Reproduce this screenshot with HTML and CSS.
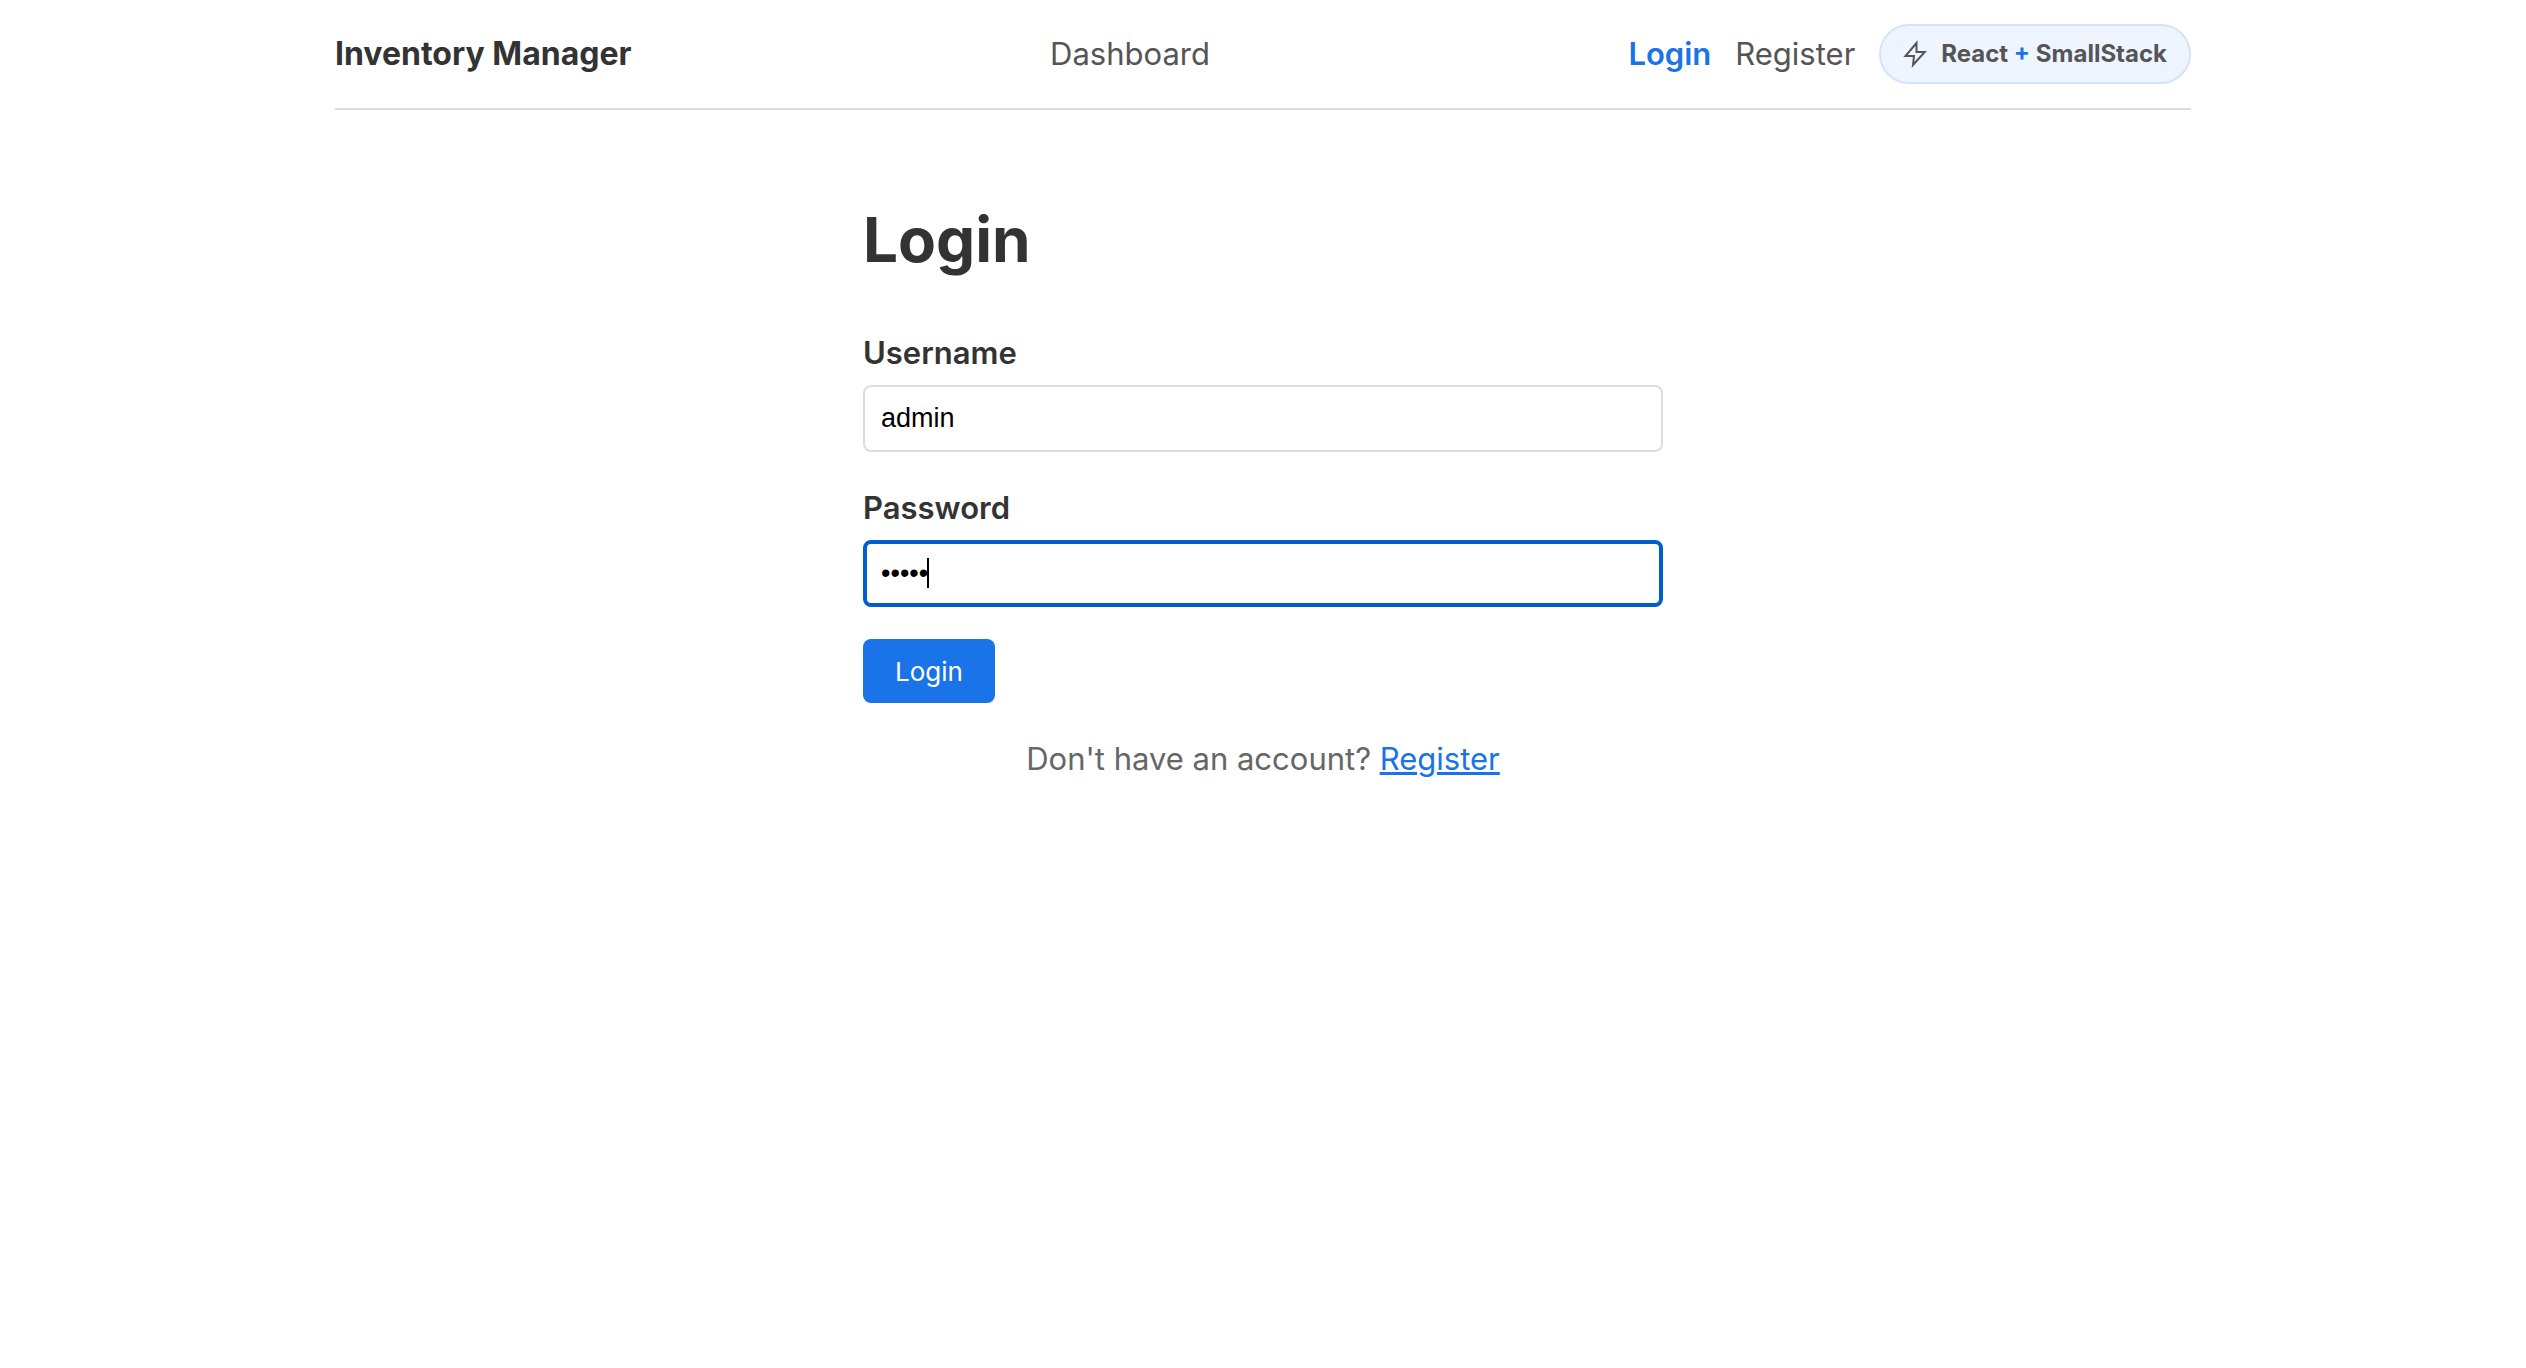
FILE: index.html
```html
<!DOCTYPE html>
<html lang="en">
<head>
<meta charset="utf-8">
<meta name="viewport" content="width=device-width, initial-scale=1">
<title>Login - Inventory Manager</title>
<link rel="stylesheet" href="styles.css">
</head>
<body>
<div class="container">
  <header class="navbar">
    <span class="brand">Inventory Manager</span>
    <nav class="nav-main"><a class="nav-link" href="#dashboard">Dashboard</a></nav>
    <nav class="nav-user">
      <a class="nav-link active" href="#login">Login</a>
      <a class="nav-link" href="#register">Register</a>
      <a class="stack-badge" href="#stack">
        <svg class="bolt" viewBox="0 0 24 28" aria-hidden="true"><path d="M13.500 3 2.500 16H11L10 25 21.800 12H13.500Z"/></svg>
        <span>React <span class="plus">+</span> SmallStack</span>
      </a>
    </nav>
  </header>
  <main class="login">
    <h1 class="title">Login</h1>
    <form class="form">
      <div class="field">
        <label class="label" for="username">Username</label>
        <input class="input" id="username" type="text" value="admin">
      </div>
      <div class="field">
        <label class="label" for="password">Password</label>
        <div class="password-box">
          <input class="input focused" id="password" type="password" value="admin">
          <span class="caret"></span>
        </div>
      </div>
      <button class="button" type="button">Login</button>
    </form>
    <p class="hint">Don't have an account? <a class="hint-link" href="#register">Register</a></p>
  </main>
</div>
</body>
</html>
```

FILE: styles.css
```css
* {
  box-sizing: border-box;
}

body {
  margin: 0;
  background: #fff;
  color: #333;
  font-family: Inter, "Liberation Sans", sans-serif;
  font-size: 31px;
  line-height: 48px;
}

.container {
  max-width: 1920px;
  margin: 0 auto;
  padding: 0 32px;
}

.navbar {
  display: flex;
  justify-content: space-between;
  align-items: center;
  padding: 24px 0;
  border-bottom: 2px solid #ddd;
}

.brand {
  font-size: 32px;
  font-weight: 700;
}

.nav-user {
  display: flex;
  align-items: center;
  gap: 24px;
}

.nav-link {
  color: #555;
  text-decoration: none;
}

.nav-link.active {
  color: #1a73e8;
  font-weight: 600;
}

.stack-badge {
  display: flex;
  align-items: center;
  gap: 14px;
  height: 60px;
  padding: 0 22px;
  border: 2px solid #d2e3fc;
  border-radius: 30px;
  background: #eef5ff;
  color: #555;
  font-size: 24px;
  font-weight: 700;
  text-decoration: none;
}

.bolt {
  width: 24px;
  height: 28px;
  fill: none;
  stroke: #555;
  stroke-width: 2;
}

.plus {
  color: #1a73e8;
}

.login {
  max-width: 800px;
  margin: 92px auto 0;
}

.title {
  margin: 0 0 51px;
  font-size: 62px;
  font-weight: 700;
  line-height: 76px;
}

.form {
  display: flex;
  flex-direction: column;
  align-items: flex-start;
  gap: 32px;
}

.field {
  display: flex;
  flex-direction: column;
  gap: 8px;
  width: 100%;
}

.label {
  font-weight: 600;
}

.password-box {
  position: relative;
}

.input {
  display: block;
  width: 100%;
  height: 67px;
  padding: 0 16px;
  border: 2px solid #ddd;
  border-radius: 8px;
  outline: none;
  background: #fff;
  color: #000;
  font-family: "Liberation Sans", Arial, sans-serif;
  font-size: 27px;
}

.input.focused {
  padding: 0 14px;
  border: 4px solid #005fcc;
}

.caret {
  position: absolute;
  top: 18px;
  left: 64px;
  width: 2px;
  height: 30px;
  background: #000;
}

.button {
  height: 64px;
  padding: 0 32px;
  border: 0;
  border-radius: 8px;
  background: #1a73e8;
  color: #fff;
  font-family: inherit;
  font-size: 26px;
}

.hint {
  margin: 32px 0 0;
  color: #666;
  text-align: center;
}

.hint-link {
  color: #1a73e8;
  text-decoration-thickness: 3px;
}
```
